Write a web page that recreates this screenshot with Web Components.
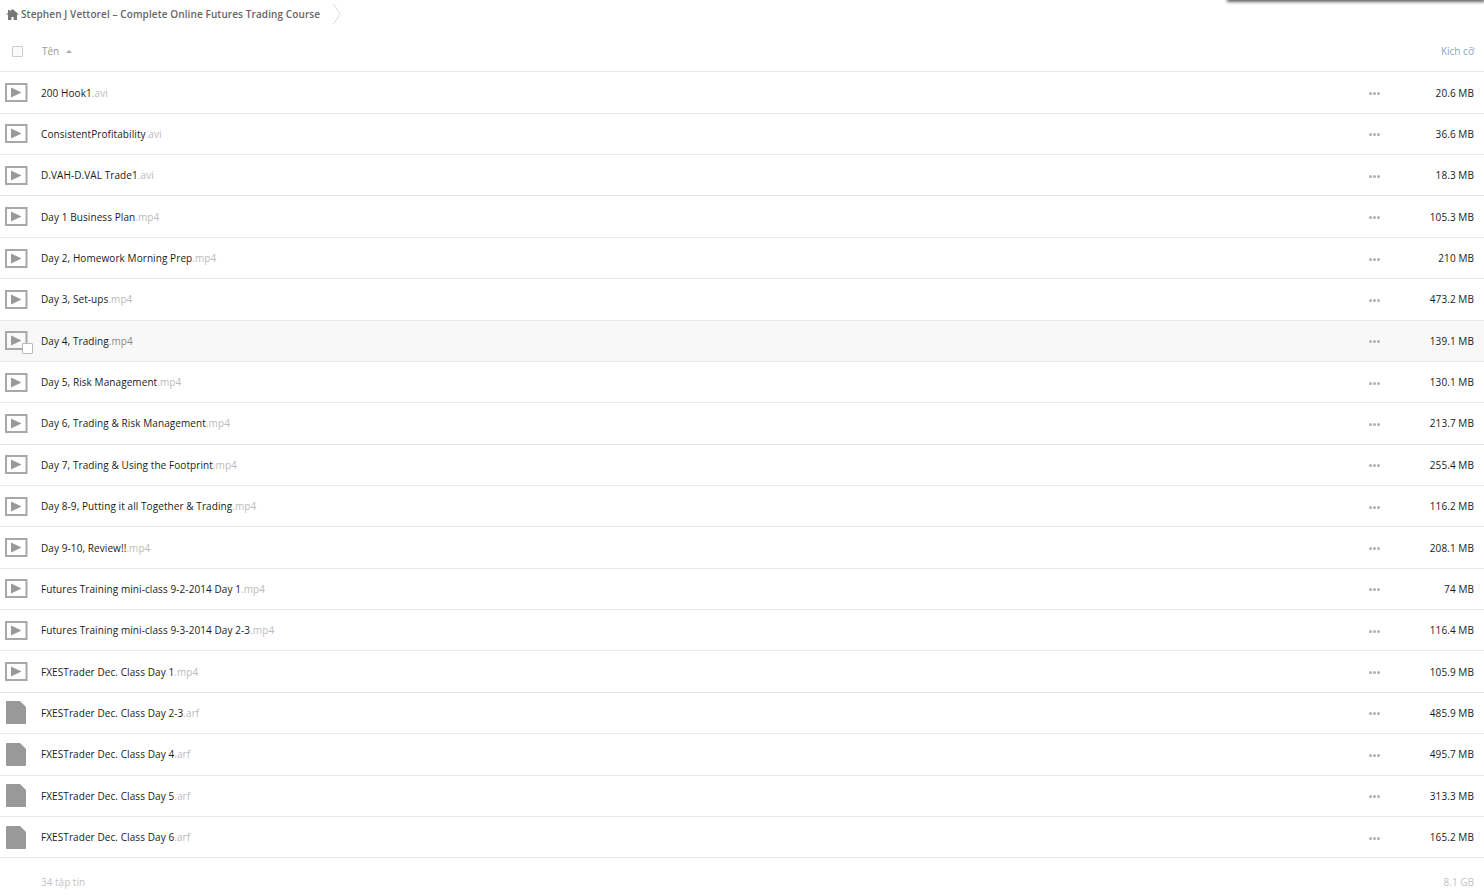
<!DOCTYPE html>
<html lang="vi">
<head>
<meta charset="utf-8">
<title>Stephen J Vettorel</title>
<style>
    html, body { margin: 0; padding: 0; background: #fff; }
    body { font-family: "Open Sans", sans-serif; overflow: hidden; height: 895px; }
</style>
</head>
<body>
<file-browser></file-browser>

<template id="crumb-template">
    <style>
        :host { display: flex; align-items: center; height: 28px; padding-left: 6px; color: #666; font-size: 10px; font-weight: 600; letter-spacing: 0.1px; }
        svg.home { width: 13px; height: 11px; margin-right: 2px; fill: #777; }
        svg.sep { width: 10px; height: 22px; margin-left: 12px; fill: none; stroke: #ddd; stroke-width: 1; }
    </style>
    <svg class="home" viewBox="0 0 13 11"><path d="M6.5 0 13 5.6H11V11H7.6V8H5.4V11H2V5.6H0L2 3.9V1H3.8V2.4Z"/></svg>
    <span><slot></slot></span>
    <svg class="sep" viewBox="0 0 10 22"><path d="M1.5 1 8 11 1.5 21"/></svg>
</template>

<template id="head-template">
    <style>
        :host { display: flex; align-items: center; height: 44.4px; box-sizing: border-box; border-bottom: 1px solid #e8e8e8; color: #999; font-size: 10px; padding: 3px 10px 0 0; }
        .check { width: 9px; height: 9px; margin-left: 12px; border: 1px solid #ccc; border-radius: 1px; background: #fbfbfb; }
        .name { margin-left: 19px; flex: 1; display: flex; align-items: center; }
        .arrow { margin-left: 7px; width: 0; height: 0; border: 3px solid transparent; border-top: 0; border-bottom: 3px solid #aaa; }
        .size { color: #8aa6c4; }
    </style>
    <span class="check"></span>
    <span class="name">Tên<span class="arrow"></span></span>
    <span class="size">Kích cỡ</span>
</template>

<template id="row-template">
    <style>
        :host { display: flex; align-items: center; height: 41.37px; box-sizing: border-box; border-bottom: 1px solid #e8e8e8; font-size: 10px; letter-spacing: 0.08px; color: #1a1a1a; padding-right: 10px; }
        :host([hovered]) { background: #f8f8f8; }
        .icon { position: relative; width: 41px; height: 100%; flex: none; display: flex; align-items: center; }
        .icon svg { display: block; }
        .video { margin-left: 4px; width: 24px; height: 19px; }
        .doc { margin-left: 6px; width: 20px; height: 23px; }
        .box { position: absolute; display: none; left: 22px; top: 22px; width: 9px; height: 9px; border: 1px solid #bbb; border-radius: 1px; background: #fff; }
        :host([hovered]) .box { display: block; }
        .name { flex: 1; white-space: nowrap; }
        .ext { color: #bbb; }
        :host([hovered]) .ext { color: #888; }
        .more { width: 11px; display: flex; gap: 1px; margin-right: 44px; margin-top: 2px; }
        .more i { width: 3px; height: 3px; border-radius: 50%; background: #b0b0b0; }
        .size { width: 50px; text-align: right; }
    </style>
    <span class="icon">
        <svg class="video" viewBox="0 0 24 19"><rect x="2" y="1" width="20.5" height="17" fill="none" stroke="#a8a8a8" stroke-width="2"/><path d="M7 4.5 17.5 9.5 7 14.5Z" fill="#999"/></svg>
        <svg class="doc" viewBox="0 0 20 23"><path d="M0 1Q0 0 1 0H14L20 6V22Q20 23 19 23H1Q0 23 0 22Z" fill="#999"/></svg>
        <span class="box"></span>
    </span>
    <span class="name"><slot></slot><span class="ext"></span></span>
    <span class="more"><i></i><i></i><i></i></span>
    <span class="size"></span>
</template>

<template id="foot-template">
    <style>
        :host { display: flex; justify-content: space-between; color: #c4c4c4; font-size: 10px; padding: 17px 10px 0 41px; }
    </style>
    <span><slot name="count"></slot></span>
    <span><slot name="total"></slot></span>
</template>

<template id="browser-template">
    <style>
        :host { display: block; position: relative; height: 895px; overflow: hidden; }
        .menu { position: absolute; top: -10px; right: 0; width: 256px; height: 10px; background: #fff; box-shadow: 0 1px 3px 1px rgba(0,0,0,.6); }
    </style>
    <div class="menu"></div>
    <slot></slot>
</template>

<script>
const FILES = [
    ['200 Hook1', '.avi', '20.6 MB'],
    ['ConsistentProfitability', '.avi', '36.6 MB'],
    ['D.VAH-D.VAL Trade1', '.avi', '18.3 MB'],
    ['Day 1 Business Plan', '.mp4', '105.3 MB'],
    ['Day 2, Homework Morning Prep', '.mp4', '210 MB'],
    ['Day 3, Set-ups', '.mp4', '473.2 MB'],
    ['Day 4, Trading', '.mp4', '139.1 MB'],
    ['Day 5, Risk Management', '.mp4', '130.1 MB'],
    ['Day 6, Trading & Risk Management', '.mp4', '213.7 MB'],
    ['Day 7, Trading & Using the Footprint', '.mp4', '255.4 MB'],
    ['Day 8-9, Putting it all Together & Trading', '.mp4', '116.2 MB'],
    ['Day 9-10, Review!!', '.mp4', '208.1 MB'],
    ['Futures Training mini-class 9-2-2014 Day 1', '.mp4', '74 MB'],
    ['Futures Training mini-class 9-3-2014 Day 2-3', '.mp4', '116.4 MB'],
    ['FXESTrader Dec. Class Day 1', '.mp4', '105.9 MB'],
    ['FXESTrader Dec. Class Day 2-3', '.arf', '485.9 MB'],
    ['FXESTrader Dec. Class Day 4', '.arf', '495.7 MB'],
    ['FXESTrader Dec. Class Day 5', '.arf', '313.3 MB'],
    ['FXESTrader Dec. Class Day 6', '.arf', '165.2 MB'],
];

function templated(el, id) {
    const root = el.attachShadow({ mode: 'open' });
    root.appendChild(document.getElementById(id).content.cloneNode(true));
    return root;
}

class FileCrumb extends HTMLElement {
    constructor() {
        super();
        templated(this, 'crumb-template');
    }
}

class FileHead extends HTMLElement {
    constructor() {
        super();
        templated(this, 'head-template');
    }
}

class FileRow extends HTMLElement {
    constructor() {
        super();
        this.$root = templated(this, 'row-template');
    }

    connectedCallback() {
        const ext = this.getAttribute('ext');
        this.$root.querySelector('.ext').textContent = ext;
        this.$root.querySelector('.size').textContent = this.getAttribute('size');
        // .arf files get the plain document icon, the rest the video one
        this.$root.querySelector(ext === '.arf' ? '.video' : '.doc').remove();
    }
}

class FileFoot extends HTMLElement {
    constructor() {
        super();
        templated(this, 'foot-template');
    }
}

class FileBrowser extends HTMLElement {
    constructor() {
        super();
        templated(this, 'browser-template');
    }

    connectedCallback() {
        const crumb = document.createElement('file-crumb');
        crumb.textContent = 'Stephen J Vettorel – Complete Online Futures Trading Course';
        this.appendChild(crumb);
        this.appendChild(document.createElement('file-head'));
        FILES.forEach(([name, ext, size]) => {
            const row = document.createElement('file-row');
            row.textContent = name;
            row.setAttribute('ext', ext);
            row.setAttribute('size', size);
            if (name === 'Day 4, Trading') row.setAttribute('hovered', '');
            this.appendChild(row);
        });
        const foot = document.createElement('file-foot');
        foot.innerHTML = '<span slot="count">34 tập tin</span><span slot="total">8.1 GB</span>';
        this.appendChild(foot);
    }
}

customElements.define('file-crumb', FileCrumb);
customElements.define('file-head', FileHead);
customElements.define('file-row', FileRow);
customElements.define('file-foot', FileFoot);
customElements.define('file-browser', FileBrowser);
</script>
</body>
</html>
